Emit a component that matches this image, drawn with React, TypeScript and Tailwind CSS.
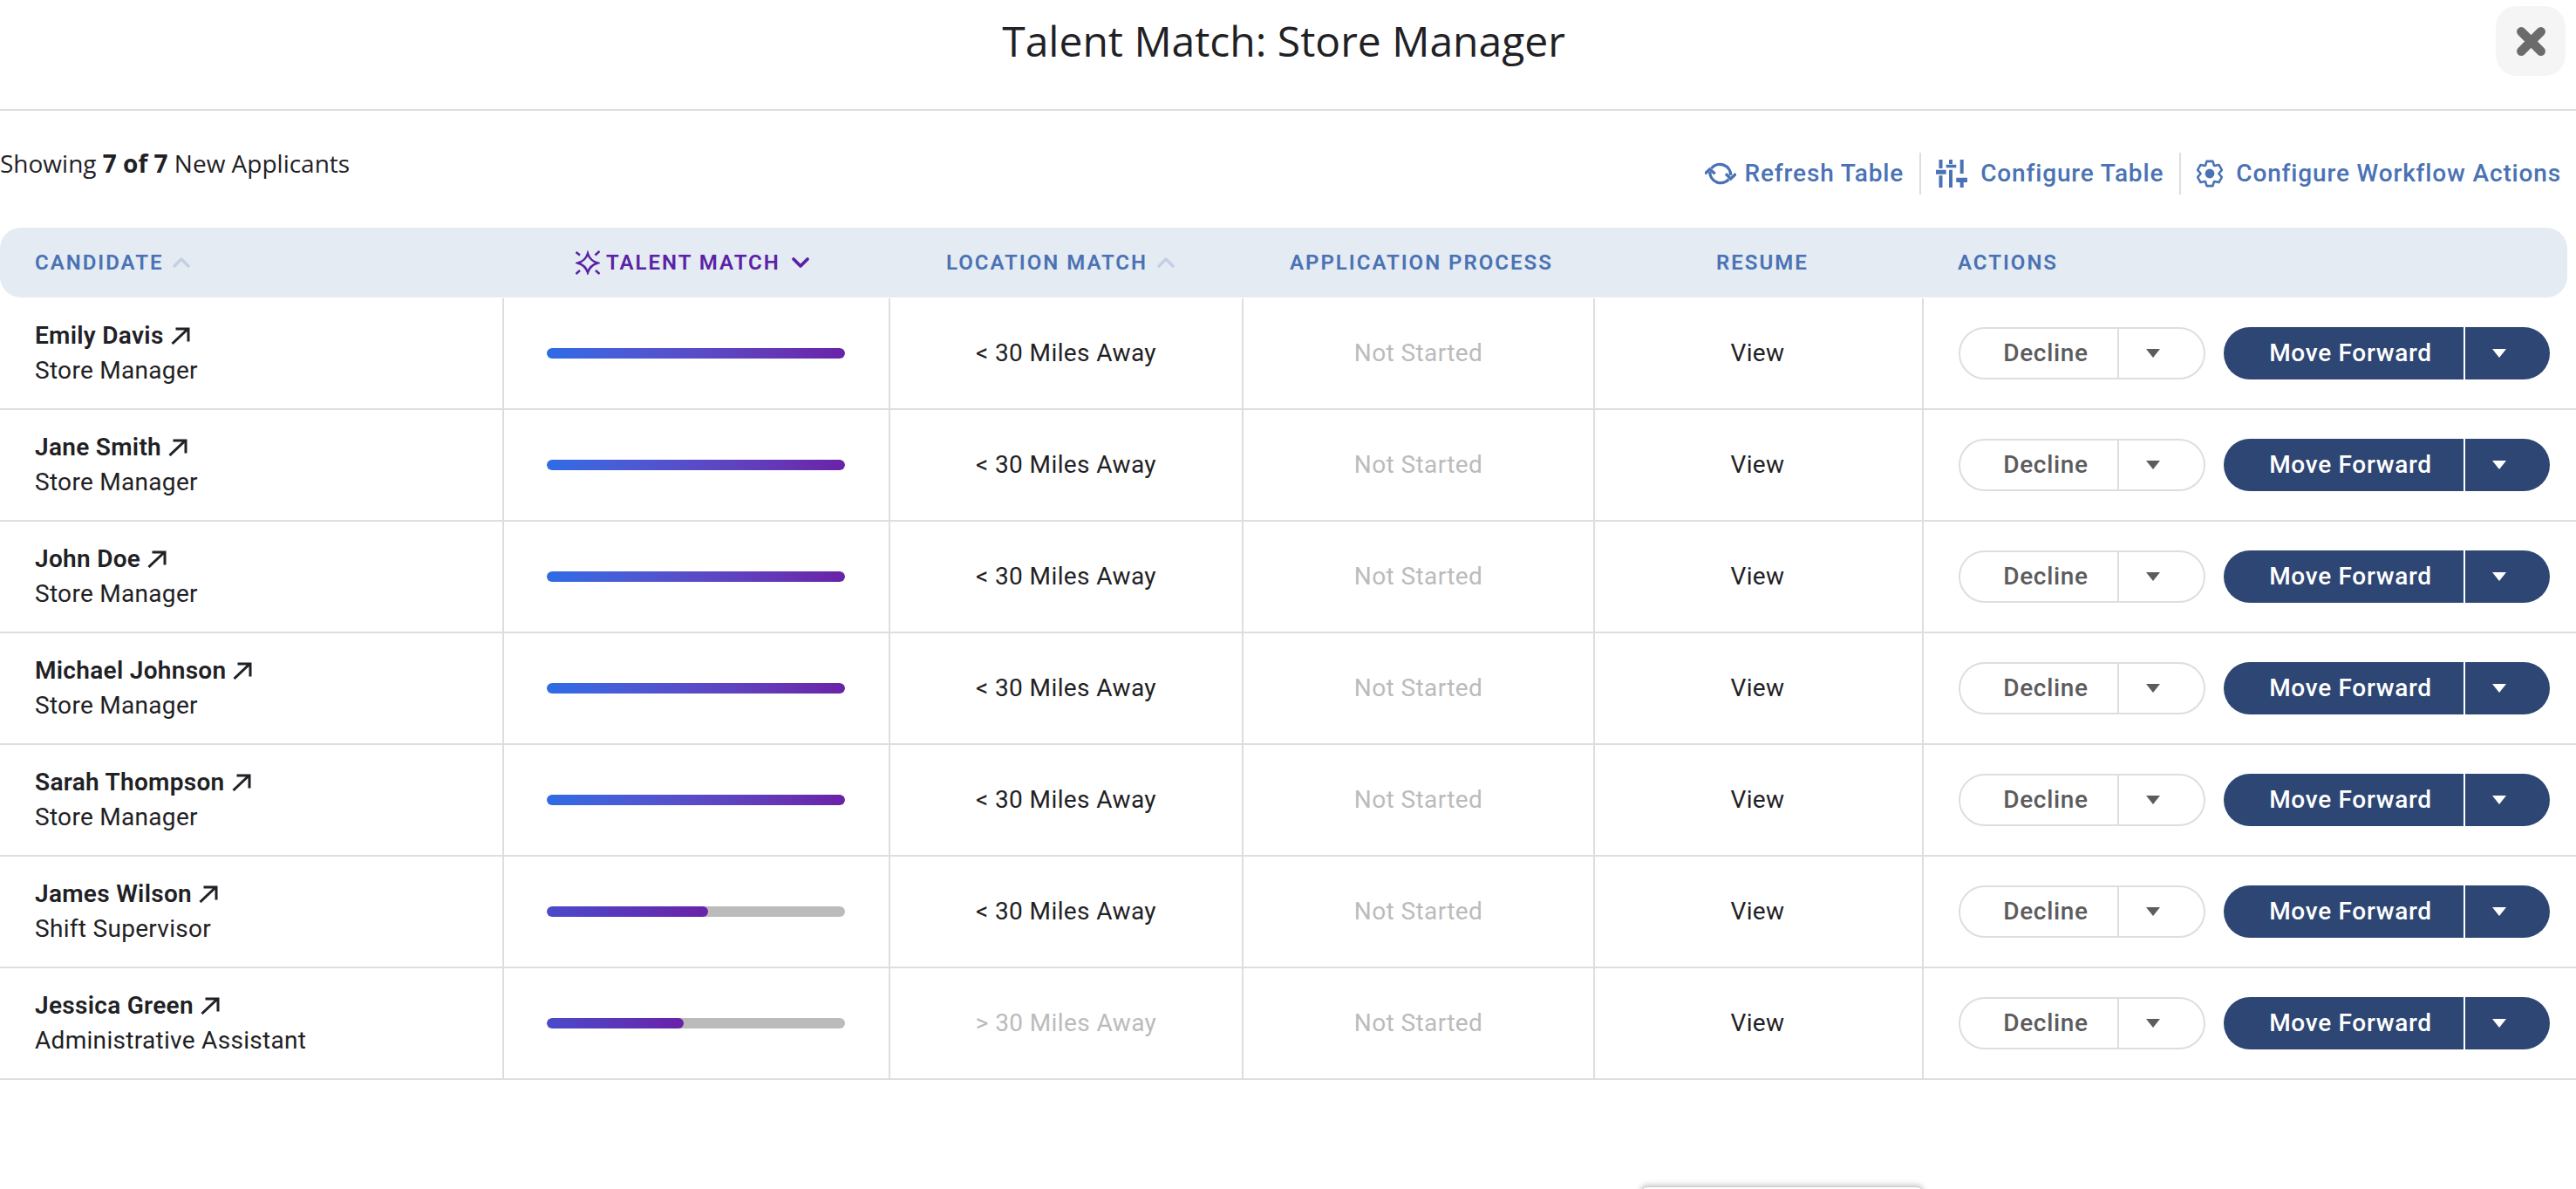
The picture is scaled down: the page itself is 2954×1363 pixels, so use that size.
import { ChevronDown, ChevronUp, X } from "lucide-react";

type Candidate = {
  name: string;
  role: string;
  fill: string;
  far?: boolean;
};

const candidates: Candidate[] = [
  { name: "Emily Davis", role: "Store Manager", fill: "100%" },
  { name: "Jane Smith", role: "Store Manager", fill: "100%" },
  { name: "John Doe", role: "Store Manager", fill: "100%" },
  { name: "Michael Johnson", role: "Store Manager", fill: "100%" },
  { name: "Sarah Thompson", role: "Store Manager", fill: "100%" },
  { name: "James Wilson", role: "Shift Supervisor", fill: "54%" },
  { name: "Jessica Green", role: "Administrative Assistant", fill: "46%", far: true },
];

// gear outline: six teeth, first one pointing up
const gearPoints = Array.from({ length: 6 })
  .flatMap((_, i) => {
    const a = (i * Math.PI) / 3 - Math.PI / 2;
    return [
      [a - 0.5, 10.5],
      [a - 0.24, 14.5],
      [a + 0.24, 14.5],
      [a + 0.5, 10.5],
    ];
  })
  .map(([a, r]) => `${(15 + r * Math.cos(a)).toFixed(2)},${(16 + r * Math.sin(a)).toFixed(2)}`)
  .join(" ");

const RefreshIcon = () => (
  <svg viewBox="0 0 36 28" className="w-[36px] h-[28px] -mr-[6px] fill-none stroke-[#4a72b4]" strokeWidth="3.4">
    <path d="M7.5 8A12.5 12.5 0 0 1 29.7 16" />
    <path d="M5.7 12A12.5 12.5 0 0 0 27.5 20.5" />
    <path d="M0 14.3L5.7 9L11.7 14.3M24 14.3L29.7 20L35.7 14.3" />
  </svg>
);

const SlidersIcon = () => (
  <svg viewBox="0 0 36 32" className="w-[36px] h-[32px] fill-[#4a72b4]">
    <path d="M3.5 0h4v10h-4zM0 11.7h11.7v5H0zM3.5 18.3h4V32h-4zM15 0h4v5h-4zM11.7 5.7h11.6v3.6H11.7zM15 11.7h4V32h-4zM27.7 0h4v16h-4zM23.3 20.7H36V26H23.3zM27.7 26h4v6h-4z" />
  </svg>
);

const GearIcon = () => (
  <svg viewBox="0 0 30 32" className="w-[30px] h-[32px] fill-none stroke-[#4a72b4]">
    <polygon points={gearPoints} strokeWidth="2.6" strokeLinejoin="round" />
    <circle cx="15" cy="16" r="5.4" className="fill-[#4a72b4]" stroke="none" />
  </svg>
);

const SparkIcon = () => (
  <svg viewBox="0 0 28 28" className="w-[28px] h-[28px] fill-none stroke-[#5b21a6]" strokeWidth="2.5">
    <path d="M14 3.5Q16.5 12 25.5 14.5Q16.5 17 14 25.5Q11.5 17 2.5 14.5Q11.5 12 14 3.5Z" />
    <path d="M0.5 2L5 5.5M27.5 1L22.5 5.5M0.5 27L5 23M27.5 27L23 23" />
  </svg>
);

const OpenArrow = () => (
  <svg viewBox="0 0 22 20" className="w-[22px] h-[20px] fill-none stroke-[#1f2125]" strokeWidth="3">
    <path d="M1.5 19L19.5 2M5.5 2H20V16.5" />
  </svg>
);

const Caret = ({ color }: { color: string }) => (
  <span
    className="w-0 h-0 border-x-[8.5px] border-x-transparent border-t-[10px]"
    style={{ borderTopColor: color }}
  />
);

const ToolbarLink = ({ icon, label }: { icon: React.ReactNode; label: string }) => (
  <button className="flex items-center gap-[15px] text-[28px] leading-[48px] font-medium tracking-[0.85px] text-[#4a72b4]">
    {icon}
    {label}
  </button>
);

const Row = ({ candidate }: { candidate: Candidate }) => (
  <div className="grid grid-cols-[576px_443px_405px_403px_377px_1fr] h-[128px] border-b-2 border-[#dedede] font-['Roboto',sans-serif] text-[28px] tracking-[0.4px]">
    <div className="flex flex-col pl-[40px] pt-[23px] text-[#1f2125] tracking-[0.3px]">
      <div className="flex items-center gap-[8px] h-[40px] font-semibold">
        {candidate.name}
        <OpenArrow />
      </div>
      <div className="h-[40px] leading-[40px]">{candidate.role}</div>
    </div>
    <div className="flex items-center border-l-2 border-[#dedede] pl-[49px]">
      <div className="w-[342px] h-[12px] rounded-full bg-[#bbbbbb] overflow-hidden">
        <div
          className="h-full rounded-full bg-gradient-to-r from-[#2c6ce6] to-[#6a22a8]"
          style={{
            width: candidate.fill,
            backgroundImage: candidate.fill === "100%" ? undefined : "linear-gradient(to right, #4a4bcb, #6a22a8)",
          }}
        />
      </div>
    </div>
    <div
      className={`flex items-center justify-center border-l-2 border-[#dedede] ${
        candidate.far ? "text-[#bbbbbb]" : "text-[#1f2125]"
      }`}
    >
      {candidate.far ? "> 30 Miles Away" : "< 30 Miles Away"}
    </div>
    <div className="flex items-center justify-center border-l-2 border-[#dedede] text-[#bbbbbb]">Not Started</div>
    <div className="flex items-center justify-center border-l-2 border-[#dedede] pr-[2px] text-[#1f2125]">View</div>
    <div className="flex items-center border-l-2 border-[#dedede] pl-[40px] gap-[21px] tracking-[0.7px]">
      <div className="flex w-[283px] h-[60px] rounded-full border-2 border-[#dedede] text-[#5c5c5c] font-medium">
        <div className="flex items-center justify-center w-[182px] pl-[16px] border-r-2 border-[#dedede]">Decline</div>
        <div className="flex flex-1 items-center justify-center pr-[20px]">
          <Caret color="#5c5c5c" />
        </div>
      </div>
      <div className="flex w-[374px] h-[60px] rounded-full bg-[#2d4674] text-white font-medium">
        <div className="flex items-center justify-center w-[277px] pl-[16px] border-r-2 border-white">Move Forward</div>
        <div className="flex flex-1 items-center justify-center pr-[20px]">
          <Caret color="#ffffff" />
        </div>
      </div>
    </div>
  </div>
);

const App = () => {
  return (
    <div className="relative h-[1363px] overflow-hidden bg-white">
      {/* Title bar */}
      <div className="relative flex items-center justify-center h-[127px] pr-[10px] border-b-2 border-[#dedede]">
        <h1 className="pb-[32px] font-['Open_Sans',sans-serif] text-[48px] leading-[62px] text-[#1f2125]">
          Talent Match: Store Manager
        </h1>
        <button className="absolute right-[12px] top-[7px] flex items-center justify-center w-[80px] h-[80px] rounded-[24px] bg-[#f5f5f5] text-[#6b6b6b]">
          <X size={45} strokeWidth={5.5} strokeLinecap="round" />
        </button>
      </div>

      {/* Count and table actions */}
      <div className="flex justify-between h-[134px] pr-[17px]">
        <p className="pt-[40px] font-['Open_Sans',sans-serif] text-[28px] leading-[40px] text-[#1f2125]">
          Showing <b>7 of 7</b> New Applicants
        </p>
        <div className="flex items-start pt-[48px] font-['Roboto',sans-serif]">
          <ToolbarLink icon={<RefreshIcon />} label="Refresh Table" />
          <div className="w-[2px] h-[48px] ml-[18px] mr-[17px] bg-[#dedede]" />
          <ToolbarLink icon={<SlidersIcon />} label="Configure Table" />
          <div className="w-[2px] h-[48px] ml-[18px] mr-[18px] bg-[#dedede]" />
          <ToolbarLink icon={<GearIcon />} label="Configure Workflow Actions" />
        </div>
      </div>

      {/* Table head */}
      <div className="grid grid-cols-[576px_443px_405px_403px_377px_1fr] items-center w-[2944px] h-[80px] rounded-[24px] bg-[#e4ebf2] font-['Roboto',sans-serif] text-[24px] font-semibold tracking-[2px] text-[#4a72b4]">
        <div className="flex items-center gap-[5px] pl-[40px]">
          CANDIDATE
          <ChevronUp size={32} strokeWidth={2.5} className="text-[#c3cfe3]" />
        </div>
        <div className="flex items-center gap-[7px] pl-[84px] text-[#5b21a6]">
          <SparkIcon />
          TALENT MATCH
          <ChevronDown size={32} strokeWidth={2.8} />
        </div>
        <div className="flex items-center gap-[5px] pl-[66px]">
          LOCATION MATCH
          <ChevronUp size={32} strokeWidth={2.5} className="text-[#c3cfe3]" />
        </div>
        <div className="pl-[55px]">APPLICATION PROCESS</div>
        <div className="pl-[141px]">RESUME</div>
        <div className="pl-[41px]">ACTIONS</div>
      </div>

      <div className="pt-px">
        {candidates.map((c) => (
          <Row key={c.name} candidate={c} />
        ))}
      </div>

      {/* Edge of a popup peeking in at the bottom */}
      <div className="absolute left-[1881px] top-[1360px] w-[325px] h-[20px] rounded-t-[8px] bg-white border border-[#cccccc] shadow-[0_-2px_6px_rgba(0,0,0,0.2)]" />
    </div>
  );
};

export default App;
